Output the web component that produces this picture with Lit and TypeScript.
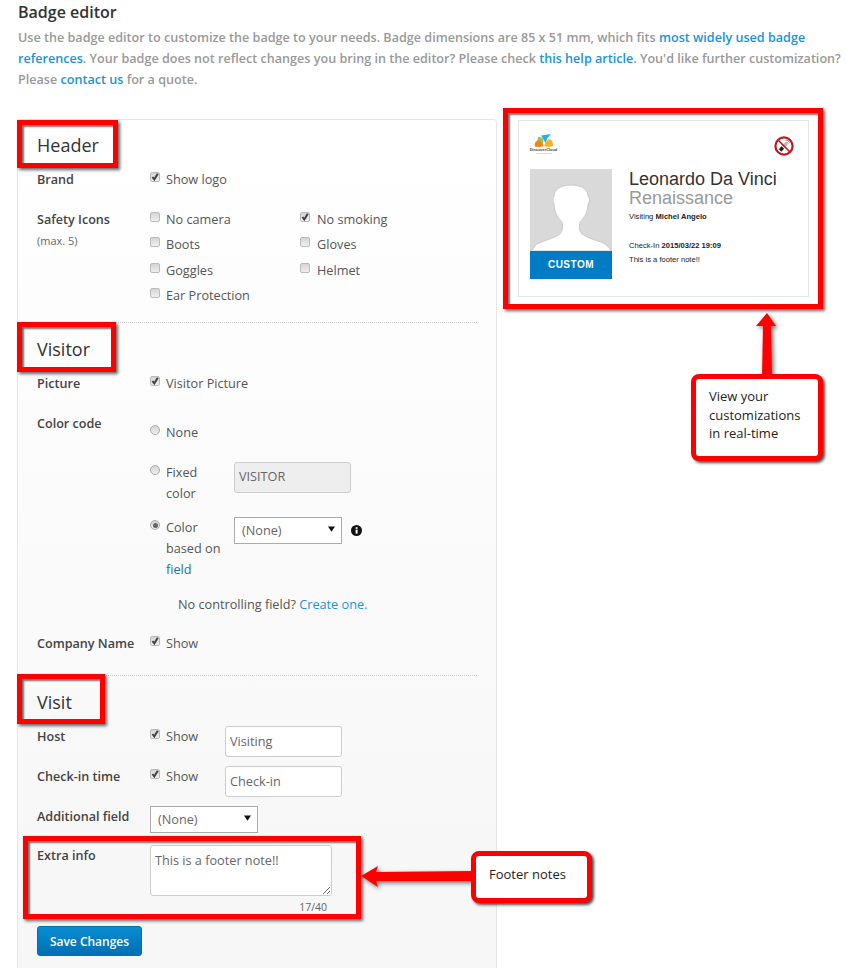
import { LitElement, html, css, svg } from "lit";
import { customElement } from "lit/decorators.js";

const check = (on: boolean) => html`<span class="cb">${on ? html`<svg viewBox="0 0 10 10" width="10" height="10"><path d="M2.4 5 L4.3 7.4 L7.8 1.8" fill="none" stroke="#444" stroke-width="2"/></svg>` : ""}</span>`;
const radio = (on: boolean) => html`<span class="rd ${on ? "on" : ""}"></span>`;
const caret = html`<svg class="caret" viewBox="0 0 8 6" width="7" height="6"><path d="M0 0H8L4 6Z" fill="#111"/></svg>`;
const opt = (on: boolean, label: string) => html`<span class="opt">${check(on)}<span>${label}</span></span>`;

@customElement("app-root")
export class AppRoot extends LitElement {
  static styles = css`
    :host { display: block; position: relative; width: 846px; height: 968px; overflow: hidden; background: #fff;
      font-family: "Open Sans", sans-serif; font-size: 12.7px; color: #555; }
    * { box-sizing: border-box; }
    a { color: #1a93d8; text-decoration: none; }
    .title { margin: 0; padding: 2px 0 0 18px; height: 27px; font-size: 16px; line-height: 21px; font-weight: 600; color: #333; }
    .intro { margin: 0; padding-left: 18px; width: 846px; font-size: 12.6px; line-height: 21px; font-weight: 600; color: #999; }
    .main { display: flex; margin-top: 29px; padding-left: 17px; align-items: flex-start; }
    .panel { width: 480px; height: 860px; border: 1px solid #e6e6e6; border-top-right-radius: 3px; padding: 0 19px;
      background: linear-gradient(#ffffff, #f6f6f6); }
    h2 { margin: 0; font-size: 18px; line-height: 26px; font-weight: 500; color: #333; }
    .row { display: grid; grid-template-columns: 113px 1fr; line-height: 21px; }
    .lbl { font-size: 12.6px; font-weight: 600; color: #444; white-space: nowrap; }
    .sub { display: block; font-size: 11px; font-weight: 400; color: #666; line-height: 21px; }
    .opt { display: flex; align-items: flex-start; gap: 6px; line-height: 21px; }
    .cb { flex: none; width: 10px; height: 10px; margin-top: 3px; border: 1px solid #bbb; border-radius: 2px;
      background: linear-gradient(#d4d4d4, #efefef); display: block; position: relative; }
    .cb svg { position: absolute; left: -1px; top: -1px; }
    .rd { flex: none; width: 10px; height: 10px; margin-top: 3px; border: 1px solid #aaa; border-radius: 50%;
      background: linear-gradient(#d4d4d4, #f0f0f0); display: block; position: relative; }
    .rd.on::after { content: ""; position: absolute; left: 1.5px; top: 1.5px; width: 5px; height: 5px; border-radius: 50%; background: #666; }
    .hd { padding-top: 12px; height: 49px; }
    .brand { margin-bottom: 19px; }
    .icons { display: grid; grid-template-columns: 150px 1fr; grid-auto-rows: 25.4px; height: 92px; }
    .icons .opt:nth-child(even) { gap: 7px; }
    .rule { border-top: 1px dotted #ccc; margin: 21px 0 0; width: 440px; height: 0; }
    .vhd { padding-top: 13px; height: 50px; }
    .pic { margin-bottom: 19px; }
    .colors { display: grid; grid-template-columns: 84px 1fr; padding-top: 9px; }
    .colors .c2 { align-self: start; }
    .fixed { margin-top: 19px; }
    .based { margin-top: 13px; }
    .fld { color: #1f6f9e; }
    .input { display: block; border: 1px solid #ccc; border-radius: 3px; background: #fff; color: #666; padding: 0 4px 2px;
      font: 12.7px/21px "Open Sans", sans-serif; width: 117px; height: 31px; }
    .input[disabled] { background: #eee; color: #666; padding-bottom: 4px; }
    .sel { display: flex; align-items: center; position: relative; width: 108px; height: 27px; border: 1px solid #aaa; background: #fff;
      padding-left: 7px; color: #666; line-height: 21px; }
    .caret { position: absolute; right: 6px; top: 8px; }
    .basedrow { display: flex; align-items: center; gap: 9px; }
    .info { flex: none; }
    .nocontrol { padding: 14px 0 0 141px; line-height: 21px; }
    .company { margin-top: 18px; }
    .rule2 { border-top: 1px dotted #ccc; margin: 21px 0 0; width: 440px; height: 0; }
    .vishd { padding-top: 13px; height: 50px; }
    .host { display: grid; grid-template-columns: 75px 1fr; }
    .r2 { margin-top: 9px; }
    .r3 { margin-top: 9px; }
    .r4 { margin-top: 12px; }
    textarea { display: block; width: 182px; height: 51px; border: 1px solid #ccc; border-radius: 3px; background: #fff; color: #666;
      padding: 4px; font: 12.7px/21px "Open Sans", sans-serif; resize: vertical; margin: 0; outline: none; }
    .count { width: 177px; text-align: right; font-size: 10.5px; line-height: 14px; color: #666; margin-top: 4px; }
    .save { display: block; margin-top: 12px; width: 105px; height: 30px; border: 1px solid #0070ad; border-radius: 3px; padding: 0;
      color: #fff; font: 600 12px "Open Sans", sans-serif; background: linear-gradient(#0a8cd0, #006fb3); }
    .badge { width: 291px; height: 177px; margin-left: 21px; margin-top: 1px; border: 1px solid #e5e5e5; background: #fff;
      padding: 13px 11px 0 11px; font-family: "Liberation Sans", Arial, sans-serif; color: #333; }
    .btop { display: flex; justify-content: space-between; align-items: flex-start; height: 35px; }
    .logo { display: flex; flex-direction: column; align-items: center; width: 27px; }
    .logo span { font-size: 3.9px; line-height: 5px; font-weight: 700; color: #444; white-space: nowrap; }
    .logo i { display: block; width: 16px; height: 1px; background: #ddd; margin-top: 1px; }
    .nosmoke { margin: 2px 3px 0 0; }
    .bbody { display: flex; gap: 17px; }
    .photo { width: 82px; }
    .photo svg { display: block; }
    .custom { height: 28px; background: #007cc5; color: #fff; font-size: 10px; font-weight: 700; letter-spacing: .5px; text-align: center; line-height: 27px; }
    .name { font-size: 18px; line-height: 20px; color: #333; white-space: nowrap; }
    .co { font-size: 18px; line-height: 20px; color: #999; margin-top: -1px; }
    .small { font-size: 7.6px; line-height: 10px; color: #222; white-space: nowrap; }
    .small b { font-weight: 700; }
    .vis { margin-top: 4px; }
    .chk { margin-top: 19px; }
    .foot { margin-top: 4px; }
    .red { position: absolute; border: 5px solid #f00; box-shadow: 2px 2px 3px rgba(0,0,0,.6), inset 2px 2px 2px rgba(0,0,0,.55); pointer-events: none; }
    .r-header { left: 17px; top: 120px; width: 101px; height: 48px; }
    .r-visitor { left: 17px; top: 322px; width: 99px; height: 50px; }
    .r-visit { left: 17px; top: 674px; width: 88px; height: 50px; }
    .r-extra { left: 23px; top: 836px; width: 338px; height: 83px; }
    .r-badge { left: 503px; top: 108px; width: 320px; height: 201px; }
    .call { position: absolute; background: #fff; border: 5px solid #f00; border-radius: 8px; box-shadow: 2px 2px 3px rgba(0,0,0,.7);
      font-family: "Open Sans", sans-serif; font-size: 13px; color: #222; }
    .c-view { left: 691px; top: 374px; width: 132px; height: 87px; padding: 8px 0 0 13px; line-height: 18.5px; }
    .c-foot { left: 471px; top: 851px; width: 121px; height: 52px; padding: 10px 0 0 13px; line-height: 16px; }
    .arrows { position: absolute; left: 0; top: 0; pointer-events: none; filter: drop-shadow(2px 2px 2px rgba(0,0,0,.55)); }
  `;

  render() {
    return html`
      <h1 class="title">Badge editor</h1>
      <p class="intro">Use the badge editor to customize the badge to your needs. Badge dimensions are 85 x 51 mm, which fits <a>most widely used badge references</a>. Your badge does not reflect changes you bring in the editor? Please check <a>this help article</a>. You'd like further customization? Please <a>contact us</a> for a quote.</p>
      <div class="main">
        <section class="panel">
          <h2 class="hd">Header</h2>
          <div class="row brand"><span class="lbl">Brand</span>${opt(true, "Show logo")}</div>
          <div class="row">
            <span class="lbl">Safety Icons<span class="sub">(max. 5)</span></span>
            <div class="icons">
              ${opt(false, "No camera")}${opt(true, "No smoking")}
              ${opt(false, "Boots")}${opt(false, "Gloves")}
              ${opt(false, "Goggles")}${opt(false, "Helmet")}
              ${opt(false, "Ear Protection")}
            </div>
          </div>
          <div class="rule"></div>

          <h2 class="vhd">Visitor</h2>
          <div class="row pic"><span class="lbl">Picture</span>${opt(true, "Visitor Picture")}</div>
          <div class="row">
            <span class="lbl">Color code</span>
            <div class="colors">
              <span class="opt">${radio(false)}<span>None</span></span><span></span>
              <span class="opt fixed">${radio(false)}<span>Fixed<br />color</span></span>
              <input class="input fixed c2" disabled value="VISITOR" />
              <span class="opt based">${radio(true)}<span>Color<br />based on<br /><a class="fld">field</a></span></span>
              <div class="basedrow based c2">
                <div class="sel">(None)${caret}</div>
                <svg class="info" width="11" height="11" viewBox="0 0 11 11"><circle cx="5.5" cy="5.5" r="5.5" fill="#111"/><rect x="4.6" y="4.6" width="2" height="4" fill="#fff"/><rect x="4.6" y="2.2" width="2" height="1.6" fill="#fff"/></svg>
              </div>
            </div>
          </div>
          <div class="nocontrol">No controlling field? <a>Create one.</a></div>
          <div class="row company"><span class="lbl">Company Name</span>${opt(true, "Show")}</div>
          <div class="rule2"></div>

          <h2 class="vishd">Visit</h2>
          <div class="row"><span class="lbl">Host</span>
            <div class="host">${opt(true, "Show")}<input class="input" value="Visiting" /></div></div>
          <div class="row r2"><span class="lbl">Check-in time</span>
            <div class="host">${opt(true, "Show")}<input class="input" value="Check-in" /></div></div>
          <div class="row r3"><span class="lbl">Additional field</span><div class="sel">(None)${caret}</div></div>
          <div class="row r4"><span class="lbl">Extra info</span>
            <div><textarea>This is a footer note!!</textarea><div class="count">17/40</div></div></div>
          <button class="save">Save Changes</button>
        </section>

        <aside class="badge">
          <div class="btop">
            <div class="logo">
              <svg width="20" height="13" viewBox="0 0 20 13">
                <path d="M4 3.5C6 2.5 8.5 3.5 9.5 6L9 10 3 8Z" fill="#9ac64d"/>
                <path d="M1 12.5C0 9 2 6.5 4.5 6.5 7 6.5 9 9.5 9.5 12.5 6 13 3 13 1 12.5Z" fill="#f5821f"/>
                <path d="M7 1.5 L17 0 L13.5 4 L11.5 9 C10 6 8.5 3.5 7 1.5Z" fill="#29aee6"/>
                <path d="M10.5 12.5C10.5 9 13 6 15.5 5 18 6 19.5 9 18.8 12 16 13 13 13 10.5 12.5Z" fill="#fbb21f"/>
              </svg>
              <span>DiscoverCloud</span>
              <i></i>
            </div>
            <svg class="nosmoke" width="20" height="20" viewBox="0 0 20 20">
              <circle cx="10" cy="10" r="8.6" fill="#fff" stroke="#c8141e" stroke-width="2.2"/>
              <path d="M4.8 13.2 L7.5 10.2 L10.2 12.6 L7.4 15.8 Z" fill="#222"/>
              <path d="M8 9.6 L12.4 5.2 L14.6 7.2 L10.8 12 Z" fill="#bbb"/>
              <path d="M11.5 4.2c1.6-.4 3.6.6 4.2 2.6" stroke="#777" fill="none" stroke-width=".9"/>
              <path d="M4 4L16 16" stroke="#c8141e" stroke-width="1.6"/>
            </svg>
          </div>
          <div class="bbody">
            <div class="photo">
              <svg width="82" height="82" viewBox="0 0 82 82">
                <rect width="82" height="82" fill="#d9d9d9"/>
                <path d="M2 82C4 76 8 74 14 72 20 70 26 68 30 65 33 62 33 57 32 53 27 48 24 42 24 34 22 33 23 28 24 27 24 21 30 16 41 16 52 16 58 21 58 27 60 29 60 33 58 35 58 43 54 49 50 53 49 57 49 62 52 65 56 68 62 70 68 72 74 74 78 76 81 82Z" fill="#fff" stroke="#cacaca" stroke-width="1"/>
              </svg>
              <div class="custom">CUSTOM</div>
            </div>
            <div>
              <div class="name">Leonardo Da Vinci</div>
              <div class="co">Renaissance</div>
              <div class="small vis">Visiting <b>Michel Angelo</b></div>
              <div class="small chk">Check-In <b>2015/03/22 19:09</b></div>
              <div class="small foot">This is a footer note!!</div>
            </div>
          </div>
        </aside>
      </div>

      <div class="red r-header"></div>
      <div class="red r-visitor"></div>
      <div class="red r-visit"></div>
      <div class="red r-extra"></div>
      <div class="red r-badge"></div>

      <svg class="arrows" width="846" height="968" viewBox="0 0 846 968">
        ${svg`<path d="M767 313 L776 326 L771 326 L772 376 L762 376 L763 326 L756 326 Z" fill="#f00"/>`}
        ${svg`<path d="M361 876 L378 866 L376 872 L473 871 L473 881 L376 881 L378 887 Z" fill="#f00"/>`}
      </svg>

      <div class="call c-view">View your<br />customizations<br />in real-time</div>
      <div class="call c-foot">Footer notes</div>
    `;
  }
}
